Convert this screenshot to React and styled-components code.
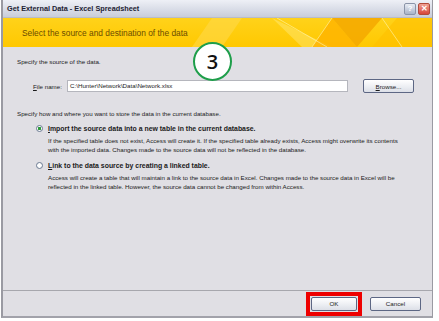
import React from 'react';
import styled, { createGlobalStyle } from 'styled-components';

const Global = createGlobalStyle`
  html, body { margin: 0; padding: 0; background: #ffffff; }
  body { font-family: "Liberation Sans", Arial, sans-serif; }
`;

const Window = styled.div`
  position: relative;
  width: 432px;
  height: 318px;
  margin-left: 1px;
  display: flex;
  flex-direction: column;
  box-sizing: border-box;
  background: #e0dfe4;
  border-left: 2px solid #9a9aa2;
  border-right: 1px solid #9a9aa2;
  border-bottom: 2px solid #a2a2aa;
`;

const TitleBar = styled.div`
  height: 17px;
  display: flex;
  align-items: center;
  justify-content: space-between;
  padding: 0 2px 0 4px;
  background: linear-gradient(#eef0f6, #d7dbe6 60%, #c9cdd9);
  border-bottom: 1px solid #b8bcc8;
  font-size: 7.3px;
  font-weight: bold;
  color: #1d2333;
`;

const TitleButtons = styled.div`
  display: flex;
  gap: 2px;
`;

const TitleButton = styled.div`
  width: 12px;
  height: 12px;
  border-radius: 2px;
  display: flex;
  align-items: center;
  justify-content: center;
  font-size: 8px;
  font-weight: bold;
  color: #fff;
  background: ${p => (p.$close ? 'linear-gradient(#f0a092, #d8453a)' : 'linear-gradient(#e8ecf4, #a9b4c8)')};
  border: 1px solid ${p => (p.$close ? '#b24a3a' : '#8a94a8')};
  box-sizing: border-box;
`;

const Banner = styled.div`
  position: relative;
  height: 29px;
  display: flex;
  align-items: center;
  padding-left: 19px;
  background: linear-gradient(#ffd21a, #ffc800);
  overflow: hidden;
  font-size: 8.4px;
  color: #6b4c00;
`;

const BannerArt = styled.svg`
  position: absolute;
  right: 0;
  top: 0;
`;

const Body = styled.div`
  flex: 1;
  padding: 10px 0 0 14px;
  font-size: 6.2px;
  color: #1a1a1a;
`;

const Line = styled.div`
  height: 9px;
  line-height: 9px;
  margin-bottom: ${p => p.$mb || 0}px;
`;

const FileRow = styled.div`
  display: flex;
  align-items: center;
  margin: 0 0 16px 16px;
  height: 14px;
`;

const FileLabel = styled.span`
  width: 34px;
`;

const FileInput = styled.div`
  width: 281px;
  height: 12px;
  box-sizing: border-box;
  background: #fff;
  border: 1px solid #b5b6bd;
  padding-left: 2px;
  line-height: 10px;
`;

const Button = styled.div`
  width: ${p => p.$w}px;
  height: 14px;
  box-sizing: border-box;
  display: flex;
  align-items: center;
  justify-content: center;
  border: 1px solid #5d6784;
  border-radius: 2px;
  background: linear-gradient(#ffffff, #eef0f4 50%, #dcdfe7);
  font-size: 6.2px;
  color: #1a1a1a;
  margin-left: ${p => p.$ml || 0}px;
`;

const Highlight = styled.div`
  border: 4px solid #ee0000;
  padding: 1px;
  margin: -5px 0;
`;

const Option = styled.div`
  display: flex;
  align-items: flex-start;
  margin: ${p => p.$mt || 0}px 0 0 19px;
`;

const Radio = styled.div`
  width: 7px;
  height: 7px;
  margin: 1px 5px 0 0;
  flex: none;
  border-radius: 50%;
  box-sizing: border-box;
  border: 1px solid #6e7d94;
  background: radial-gradient(circle, ${p => (p.$on ? '#2c9a3a 0 1.4px' : '#fff 0 1px')}, #fff 1.6px, #e6e8ee);
`;

const OptionText = styled.div`
  display: flex;
  flex-direction: column;
`;

const OptionTitle = styled.div`
  font-weight: bold;
  font-size: 6.9px;
  height: 9px;
  line-height: 9px;
  margin-bottom: 3px;
`;

const Footer = styled.div`
  height: 25px;
  border-top: 1px solid #a7a7ad;
  display: flex;
  align-items: center;
  justify-content: flex-end;
  padding-right: 11px;
`;

const StepBadge = styled.div`
  position: absolute;
  left: 190px;
  top: 42px;
  width: 39px;
  height: 39px;
  box-sizing: border-box;
  border-radius: 50%;
  border: 2px solid #1e9e4a;
  background: #fff;
  display: flex;
  align-items: center;
  justify-content: center;
  font-family: "Open Sans", "Liberation Sans", sans-serif;
  font-weight: 600;
  font-size: 20px;
  color: #111;
`;

export default function App() {
  return (
    <>
      <Global />
      <Window>
        <TitleBar>
          <span>Get External Data - Excel Spreadsheet</span>
          <TitleButtons>
            <TitleButton>?</TitleButton>
            <TitleButton $close>✕</TitleButton>
          </TitleButtons>
        </TitleBar>
        <Banner>
          Select the source and destination of the data
          <BannerArt width="250" height="29" viewBox="0 0 250 29">
            <polygon points="30,0 60,0 40,29 10,29" fill="#ffd84a" opacity="0.6" />
            <polygon points="90,0 150,29 120,29" fill="#fff3a0" opacity="0.35" />
            <polygon points="130,29 150,0 175,29" fill="#ffb300" opacity="0.8" />
            <polygon points="150,0 200,0 175,29" fill="#f5a800" opacity="0.85" />
            <polygon points="190,29 215,0 250,0 250,29" fill="#ffbf00" opacity="0.6" />
            <line x1="95" y1="0" x2="145" y2="29" stroke="#fff6b0" strokeWidth="0.6" />
            <line x1="150" y1="0" x2="130" y2="29" stroke="#fff6b0" strokeWidth="0.6" />
            <line x1="200" y1="0" x2="220" y2="29" stroke="#fff6b0" strokeWidth="0.6" />
          </BannerArt>
        </Banner>
        <Body>
          <Line $mb={13}>Specify the source of the data.</Line>
          <FileRow>
            <FileLabel><u>F</u>ile name:</FileLabel>
            <FileInput>C:\Hunter\Network\Data\Network.xlsx</FileInput>
            <Button $w={51} $ml={15}><span><u>B</u>rowse...</span></Button>
          </FileRow>
          <Line>Specify how and where you want to store the data in the current database.</Line>
          <Option $mt={6}>
            <Radio $on />
            <OptionText>
              <OptionTitle><u>I</u>mport the source data into a new table in the current database.</OptionTitle>
              <Line>If the specified table does not exist, Access will create it. If the specified table already exists, Access might overwrite its contents</Line>
              <Line>with the imported data. Changes made to the source data will not be reflected in the database.</Line>
            </OptionText>
          </Option>
          <Option $mt={7}>
            <Radio />
            <OptionText>
              <OptionTitle><u>L</u>ink to the data source by creating a linked table.</OptionTitle>
              <Line>Access will create a table that will maintain a link to the source data in Excel. Changes made to the source data in Excel will be</Line>
              <Line>reflected in the linked table. However, the source data cannot be changed from within Access.</Line>
            </OptionText>
          </Option>
        </Body>
        <Footer>
          <Highlight>
            <Button $w={46}>OK</Button>
          </Highlight>
          <Button $w={51} $ml={8}>Cancel</Button>
        </Footer>
        <StepBadge>3</StepBadge>
      </Window>
    </>
  );
}
